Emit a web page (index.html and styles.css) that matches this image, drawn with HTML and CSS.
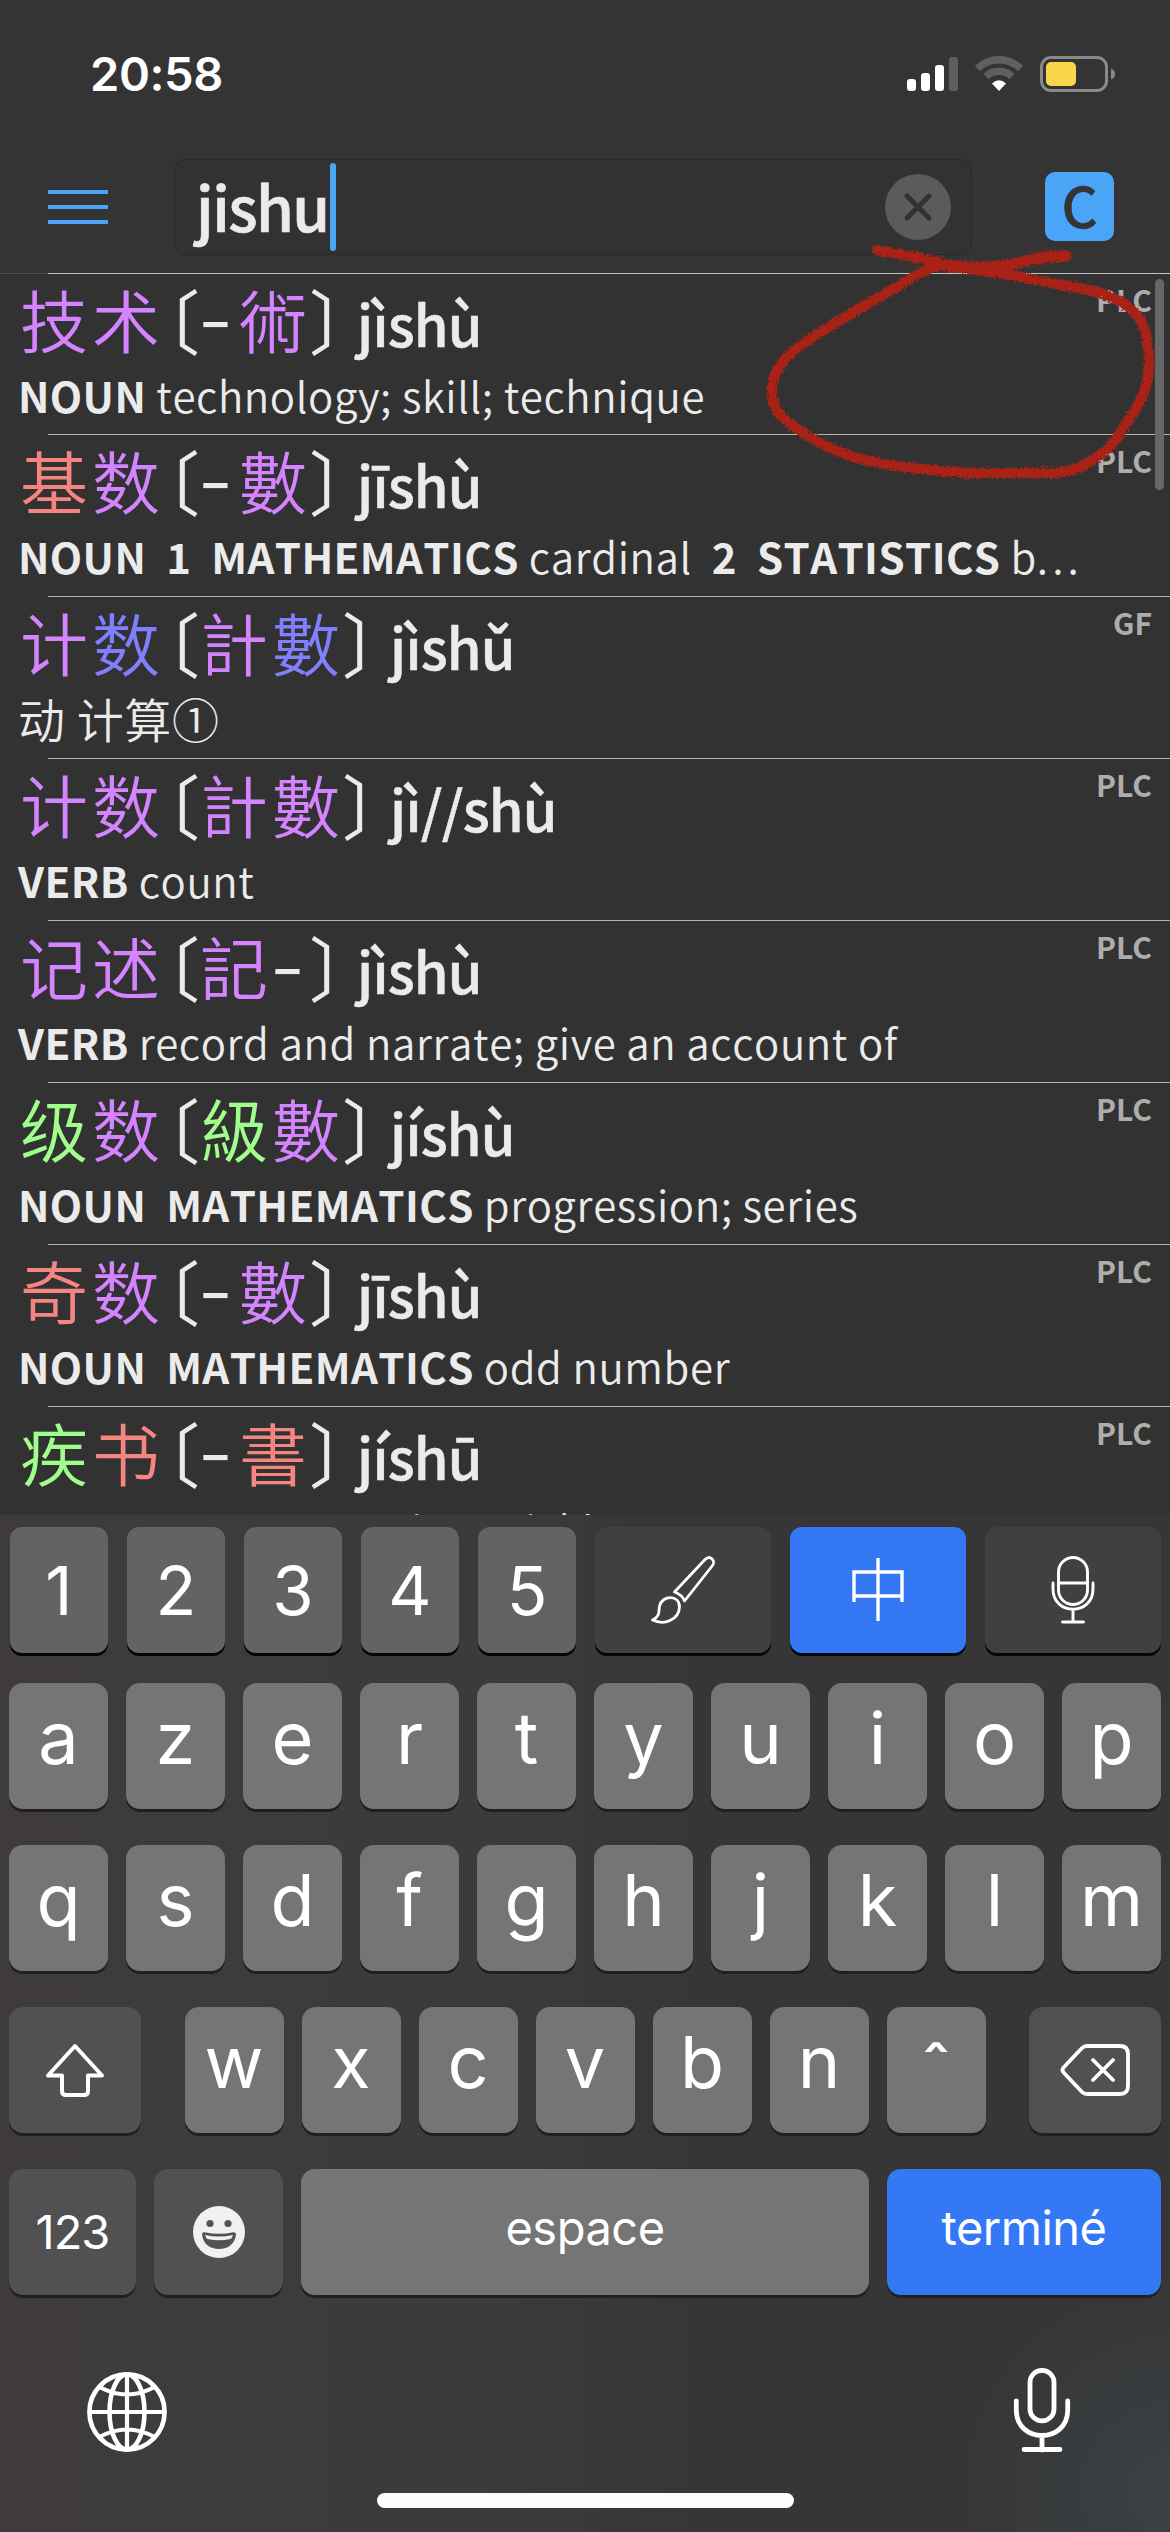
FILE: index.html
```html
<!DOCTYPE html>
<html lang="fr">
<head>
<meta charset="utf-8">
<title>Dictionary search</title>
<link rel="stylesheet" href="styles.css">
</head>
<body>
<div class="screen">
  <header class="status">
    <span class="time">20:58</span>
    <svg class="status-icons" width="210" height="40" viewBox="906 54 210 40">
      <g fill="#fff"><rect x="907" y="79" width="9" height="12" rx="3"/><rect x="921" y="73" width="9" height="18" rx="3"/><rect x="935" y="65" width="9" height="26" rx="3"/></g>
      <rect x="949" y="57" width="9" height="34" rx="3" fill="#5f5f5f"/>
      <g fill="none" stroke="#5f5f5f" stroke-width="7.500"><path d="M977.500 68.500a31 31 0 0 1 43 0"/><path d="M986 76.500a19 19 0 0 1 26 0"/></g>
      <path d="M999 91l-7-7.500q7-6.500 14 0z" fill="#fff"/>
      <rect x="1041.500" y="57.500" width="65" height="33" rx="9.500" fill="none" stroke="#8a8a8a" stroke-width="3"/>
      <rect x="1046" y="62" width="30" height="24" rx="5" fill="#f8d74a"/>
      <path d="M1111 68.500q4 1.500 4 5.500t-4 5.500z" fill="#8a8a8a"/>
    </svg>
  </header>

  <div class="searchbar">
    <div class="menu"><i></i><i></i><i></i></div>
    <div class="field">
      <span class="query">jishu</span><span class="caret"></span>
      <svg class="clear" width="66" height="66" viewBox="0 0 66 66"><circle cx="33" cy="33" r="33" fill="#5b5b5b"/><path d="M22 22l22 22M44 22L22 44" stroke="#323232" stroke-width="5" stroke-linecap="round"/></svg>
    </div>
    <div class="mode">C</div>
  </div>

  <main class="results">
    <article class="entry first">
      <div class="head"><b class="z t4">技</b><b class="z t4">术</b><b class="br l">〔</b><b class="dash">–</b><b class="z t4 trad">術</b><b class="br r">〕</b><span class="py">jìshù</span></div>
      <p class="def"><b>NOUN</b> technology; skill; technique</p><span class="src">PLC</span>
    </article>
    <article class="entry">
      <div class="head"><b class="z t1">基</b><b class="z t4">数</b><b class="br l">〔</b><b class="dash">–</b><b class="z t4 trad">數</b><b class="br r">〕</b><span class="py">jīshù</span></div>
      <p class="def"><b>NOUN&nbsp; 1&nbsp; MATHEMATICS</b> cardinal&nbsp; <b>2&nbsp; STATISTICS</b> b<span class="dots">...</span></p><span class="src">PLC</span>
    </article>
    <article class="entry">
      <div class="head"><b class="z t4">计</b><b class="z t3">数</b><b class="br l">〔</b><b class="z t4 trad">計</b><b class="z t3 trad">數</b><b class="br r">〕</b><span class="py">jìshǔ</span></div>
      <p class="def zh">动 计算①</p><span class="src">GF</span>
    </article>
    <article class="entry">
      <div class="head"><b class="z t4">计</b><b class="z t4">数</b><b class="br l">〔</b><b class="z t4 trad">計</b><b class="z t4 trad">數</b><b class="br r">〕</b><span class="py">jì//shù</span></div>
      <p class="def"><b>VERB</b> count</p><span class="src">PLC</span>
    </article>
    <article class="entry">
      <div class="head"><b class="z t4">记</b><b class="z t4">述</b><b class="br l">〔</b><b class="z t4 trad">記</b><b class="dash">–</b><b class="br r">〕</b><span class="py">jìshù</span></div>
      <p class="def"><b>VERB</b> record and narrate; give an account of</p><span class="src">PLC</span>
    </article>
    <article class="entry">
      <div class="head"><b class="z t2">级</b><b class="z t4">数</b><b class="br l">〔</b><b class="z t2 trad">級</b><b class="z t4 trad">數</b><b class="br r">〕</b><span class="py">jíshù</span></div>
      <p class="def"><b>NOUN&nbsp; MATHEMATICS</b> progression; series</p><span class="src">PLC</span>
    </article>
    <article class="entry">
      <div class="head"><b class="z t1">奇</b><b class="z t4">数</b><b class="br l">〔</b><b class="dash">–</b><b class="z t4 trad">數</b><b class="br r">〕</b><span class="py">jīshù</span></div>
      <p class="def"><b>NOUN&nbsp; MATHEMATICS</b> odd number</p><span class="src">PLC</span>
    </article>
    <article class="entry last">
      <div class="head"><b class="z t2">疾</b><b class="z t1">书</b><b class="br l">〔</b><b class="dash">–</b><b class="z t1 trad">書</b><b class="br r">〕</b><span class="py">jíshū</span></div>
      <p class="def"><b>VERB&nbsp; LITERARY</b> write quickly</p><span class="src">PLC</span>
    </article>
    <span class="scroll"></span>
  </main>

  <section class="keyboard">
    <div class="tools">
      <span class="num">1</span><span class="num">2</span><span class="num">3</span><span class="num">4</span><span class="num">5</span>
      <span class="tool"><svg width="66" height="70" viewBox="0 0 66 70" fill="none" stroke="#fff" stroke-width="2.800" stroke-linejoin="round"><path d="M24.500 37L55 4.500c5-5 11 1 7.500 6L34.500 46C33 42 29 38.500 24.500 37z"/><path d="M2.500 65c8-3.500 6-9 7-14 2.500-11 20-11.500 20 1C29 64 15 71 2.500 65z"/></svg></span>
      <span class="tool blue"><svg width="52" height="64" viewBox="0 0 52 64" fill="none" stroke="#fff" stroke-width="3.400"><path d="M26 0v63M2 44V14h48v30M2 38h48"/></svg></span>
      <span class="tool"><svg width="44" height="70" viewBox="0 0 44 70" fill="none" stroke="#fff" stroke-width="2.900" stroke-linecap="round"><rect x="7.500" y="2.500" width="29" height="47" rx="14.500"/><path d="M7.500 28h29M2 28v6c0 27 40 27 40 0v-6M22 55v12M11.500 67h21"/></svg></span>
    </div>
    <div class="row"><kbd>a</kbd><kbd>z</kbd><kbd>e</kbd><kbd>r</kbd><kbd>t</kbd><kbd>y</kbd><kbd>u</kbd><kbd>i</kbd><kbd>o</kbd><kbd>p</kbd></div>
    <div class="row"><kbd>q</kbd><kbd>s</kbd><kbd>d</kbd><kbd>f</kbd><kbd>g</kbd><kbd>h</kbd><kbd>j</kbd><kbd>k</kbd><kbd>l</kbd><kbd>m</kbd></div>
    <div class="row spread">
      <kbd class="dark side"><svg width="60" height="54" viewBox="0 0 60 54" fill="none" stroke="#fff" stroke-width="4" stroke-linejoin="round"><path d="M30 3L3 32.500h14V48q0 4 4 4h18q4 0 4-4V32.500h14z"/></svg></kbd>
      <div class="row inner"><kbd>w</kbd><kbd>x</kbd><kbd>c</kbd><kbd>v</kbd><kbd>b</kbd><kbd>n</kbd><kbd class="caretkey">ˆ</kbd></div>
      <kbd class="dark side"><svg width="70" height="52" viewBox="0 0 70 52" fill="none" stroke="#fff" stroke-width="3.800" stroke-linejoin="round" stroke-linecap="round"><path d="M27 2h33q8 0 8 8v32q0 8-8 8H27q-3 0-5-2L4 29q-3-3 0-6L22 4q2-2 5-2zM33 16l20 20M53 16L33 36"/></svg></kbd>
    </div>
    <div class="row">
      <kbd class="dark k123">123</kbd>
      <kbd class="dark emoji"><svg width="52" height="52" viewBox="0 0 52 52"><circle cx="26" cy="26" r="26" fill="#f1f1f1"/><circle cx="17" cy="17.500" r="3.600" fill="#535255"/><circle cx="35" cy="17.500" r="3.600" fill="#535255"/><path d="M9 28.500q0-2.500 2.500-2.200 14.500 3 29 0 2.500-.3 2.500 2.200C42 38 35 43 26 43S10 38 9 28.500z" fill="#535255"/><path d="M12 29q14 3 28 0-1 3-2.500 4-11.500 2.500-23 0Q13 32 12 29z" fill="#f1f1f1"/></svg></kbd>
      <kbd class="space">espace</kbd>
      <kbd class="done">terminé</kbd>
    </div>
    <footer class="bottom">
      <svg width="80" height="84" viewBox="0 -4 80 84" fill="none" stroke="#fff" stroke-width="4.600"><circle cx="40" cy="40" r="37.600"/><ellipse cx="40" cy="40" rx="17.500" ry="37.600"/><path d="M40 2v76M2 40h76M12.500 15q27.500 15 55 0M12.500 65q27.500-15 55 0" stroke-width="4.200"/></svg>
      <svg width="58" height="86" viewBox="0 0 58 86" fill="none" stroke="#fff" stroke-width="4.800" stroke-linecap="round"><rect x="17" y="3.400" width="24" height="50.500" rx="12"/><path d="M3.300 34v9c0 34 51.400 34 51.400 0v-9M29 69v14M11 82.500h36"/></svg>
    </footer>
    <div class="home"></div>
  </section>

  <svg class="pencil" viewBox="760 235 420 350">
    <defs><filter id="rough" x="-5%" y="-5%" width="110%" height="110%"><feTurbulence type="fractalNoise" baseFrequency="0.5" numOctaves="2" seed="4"/><feDisplacementMap in="SourceGraphic" scale="9" xChannelSelector="R" yChannelSelector="G"/></filter></defs>
    <g filter="url(#rough)" fill="none" stroke="#aa2318" stroke-linecap="round" stroke-linejoin="round">
      <path stroke-width="10" d="M877 250C900 254 925 258 948 265C975 272 1005 272 1029 279C1055 285 1085 287 1106 295C1124 302 1138 311 1144 328C1149 342 1150 362 1148 376C1145 398 1134 412 1125 425C1115 443 1106 452 1096 458C1082 467 1070 473 1050 473C1016 472 985 475 953 472C918 469 880 465 853 457C824 447 795 430 779 414C770 402 770 385 777 370C785 356 795 350 807 341C835 322 875 300 900 285C920 272 935 264 953 265"/>
      <path stroke-width="11.500" d="M948 266C975 269 1005 267 1029 260C1045 257 1055 256 1066 256"/>
    </g>
  </svg>
</div>
</body>
</html>
```
FILE: styles.css
```css
* { box-sizing: border-box; margin: 0; padding: 0; }
body { background: #323232; color: #ebebeb; font-family: "Noto Sans CJK SC", "Noto Sans", sans-serif; }
.screen { position: relative; width: 1170px; height: 2532px; overflow: hidden; display: flex; flex-direction: column; }
svg { display: block; flex: none; }

/* status bar and search header */
.status { height: 159px; padding: 54px 54px 0 90px; background: #343434; display: flex; justify-content: space-between; align-items: flex-start; }
.time { font: 600 47px/40px Inter, sans-serif; letter-spacing: -0.4px; color: #fff; }
.searchbar { height: 114px; background: #343434; display: flex; align-items: flex-start; padding-left: 48px; }
.menu { width: 60px; margin: 31px 66px 0 0; display: flex; flex-direction: column; gap: 11px; }
.menu i { height: 4px; background: #4aa5f9; }
.field { width: 798px; height: 96px; border: 1px solid #292929; border-radius: 12px; background: #323232; display: flex; align-items: center; padding: 0 20px; }
.query { font-size: 61px; line-height: 88px; font-weight: 500; letter-spacing: -1.5px; margin: -2px 0 0 1px; -webkit-text-stroke: 0.7px currentColor; }
.caret { width: 6px; height: 88px; border-radius: 3px; background: #4aa5f9; margin-left: 1px; }
.clear { margin-left: auto; }
.mode { width: 69px; height: 69px; margin: 13px 0 0 73px; border-radius: 10px; background: #4aa5f9; color: #343434; font-size: 56px; line-height: 63px; font-weight: 500; text-align: center; -webkit-text-stroke: 0.5px currentColor; }

/* result list: its last entry runs on under the keyboard */
.results { position: relative; height: 1242px; flex: none; }
.entry { position: relative; height: 162px; padding-left: 18px; }
.entry.first { height: 162px; border-top: 1px solid #4b4b4b; }
.entry::after { content: ""; position: absolute; left: 48px; right: 0; bottom: 0; height: 1px; background: #b4b4b4; }
.entry.first::before { content: ""; position: absolute; left: 48px; right: 0; top: -1px; height: 1px; background: #c2c2c2; }
.head { display: flex; height: 96px; }
.head b { line-height: 89px; white-space: nowrap; display: flex; justify-content: center; }
.z { width: 72px; font-size: 68px; font-weight: 350; }
.trad { font-family: "Noto Sans CJK TC", sans-serif; }
.t1 { color: #f48581; }
.t2 { color: #a0ff8c; }
.t3 { color: #8080ff; }
.t4 { color: #d484ff; }
.br { width: 36px; font-size: 70px; font-weight: 400; font-feature-settings: "halt"; }
.br.l { padding-left: 5px; }
.head .r { justify-content: flex-start; }
.dash { width: 39px; font-size: 54px; font-weight: 700; padding-right: 4px; }
.head .dash { line-height: 85px; }
.py { margin-left: 12px; font-size: 56px; line-height: 98px; font-weight: 500; letter-spacing: -0.8px; -webkit-text-stroke: 0.5px currentColor; }
.def { font-size: 42px; line-height: 49px; white-space: nowrap; font-weight: 350; font-kerning: none; letter-spacing: 0.6px; }
.def b { letter-spacing: 0.4px; font-weight: 700; }
.dots { letter-spacing: 4px; }
.def.zh { font-weight: 350; font-size: 47px; }
.last .def { padding-top: 1px; }
.src { position: absolute; right: 18px; top: 3px; font-size: 30px; line-height: 44px; font-weight: 700; color: #adadad; }
.scroll { position: absolute; right: 6px; top: 6px; width: 9px; height: 211px; border-radius: 5px; background: #676767; }

/* keyboard */
.keyboard { position: relative; z-index: 1; flex: 1; background: radial-gradient(circle at 100% 96%, #3b4145 0, #3b414500 210px), linear-gradient(90deg, #3f3b3d 0, #3b3b3b 42%, #363636 60%); display: flex; flex-direction: column; padding: 12px 9px 0; font-family: Inter, sans-serif; color: #fff; }
.tools { display: grid; grid-template-columns: repeat(5, 98px) repeat(3, 176px); gap: 19px; height: 126px; margin: 0 0 30px 1px; }
.tools span { border-radius: 12px; background: #636363; box-shadow: 0 3px 0 #050505; display: flex; align-items: center; justify-content: center; font-size: 67px; font-weight: 375; }
.tools .tool { background: #404040; }
.tools .blue { background: #3478f6; }
.row { display: flex; gap: 18px; margin-bottom: 36px; }
.row.spread { justify-content: space-between; }
.row.inner { margin: 0; }
kbd { width: 99px; height: 126px; border-radius: 14px; background: #757575; box-shadow: 0 3px 0 #202020; display: flex; justify-content: center; font: 375 72px/110px Inter, sans-serif; }
kbd.dark { background: #525152; align-items: center; }
kbd.side { width: 132px; }
kbd.caretkey { padding-top: 9px; }
kbd.k123 { width: 127px; font-size: 47px; line-height: 126px; letter-spacing: -1px; }
kbd.emoji { width: 129px; }
kbd.space { width: 568px; font-size: 47px; line-height: 118px; letter-spacing: -0.5px; }
kbd.done { width: 274px; font-size: 47px; line-height: 118px; letter-spacing: -0.5px; background: #3478f6; }
.bottom { display: flex; justify-content: space-between; align-items: center; padding: 0 90px 0 78px; height: 88px; margin-top: 35px; }
.home { width: 417px; height: 15px; border-radius: 8px; background: #fdfdfd; margin: 39px auto 0; }

/* hand-drawn mark over the list */
.pencil { position: absolute; left: 760px; top: 235px; width: 420px; height: 350px; pointer-events: none; }
```
